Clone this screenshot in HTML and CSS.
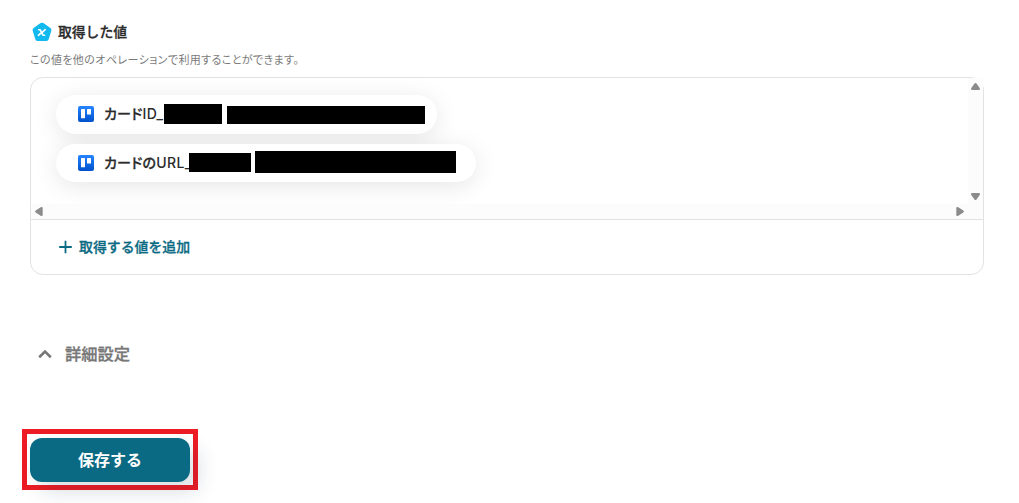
FILE: index.html
```html
<!DOCTYPE html>
<html lang="ja">
<head>
  <meta charset="UTF-8">
  <meta name="viewport" content="width=device-width, initial-scale=1.0">
  <title>取得した値</title>
  <link rel="stylesheet" href="styles.css">
</head>
<body>

<main class="content">
  <div class="heading">
    <svg class="heading-icon" width="20" height="20" viewBox="0 0 20 20">
      <path d="M8.6 1.1Q10 .2 11.4 1.1L18.4 6Q19.8 7.1 19.3 8.7L16.8 17Q16.3 19 14.4 19H5.6Q3.7 19 3.2 17L.7 8.7Q.2 7.1 1.6 6Z" fill="#12b9ee"/>
      <path d="M6.7 7.8H8.2L11 13.2H12.6M13.1 7.6L10.3 10.3M9.1 10.8L6.4 13.3" fill="none" stroke="#fff" stroke-width="1.6" stroke-linecap="round" stroke-linejoin="round"/>
    </svg>
    <h2 class="heading-text">取得した値</h2>
  </div>
  <p class="description">この値を他のオペレーションで利用することができます。</p>

  <section class="panel">
    <div class="values">
      <div class="values-list">
        <div class="value value-id">
          <svg class="trello" width="16" height="16" viewBox="0 0 16 16">
            <defs>
              <linearGradient id="blue" x1="0" y1="0" x2="0" y2="1">
                <stop offset="0" stop-color="#2684ff"/>
                <stop offset="1" stop-color="#0052cc"/>
              </linearGradient>
            </defs>
            <rect width="16" height="16" rx="2" fill="url(#blue)"/>
            <rect x="3" y="3" width="4" height="9.3" rx=".6" fill="#fff"/>
            <rect x="9" y="3" width="4" height="5.6" rx=".6" fill="#fff"/>
          </svg>
          <span class="value-text">カード<span class="latin">ID_</span></span>
          <span class="mask mask-id-name"></span>
          <span class="mask mask-id-value"></span>
        </div>
        <div class="value value-url">
          <svg class="trello" width="16" height="16" viewBox="0 0 16 16">
            <rect width="16" height="16" rx="2" fill="url(#blue)"/>
            <rect x="3" y="3" width="4" height="9.3" rx=".6" fill="#fff"/>
            <rect x="9" y="3" width="4" height="5.6" rx=".6" fill="#fff"/>
          </svg>
          <span class="value-text">カードの<span class="latin">URL_</span></span>
          <span class="mask mask-url-name"></span>
          <span class="mask mask-url-value"></span>
        </div>
      </div>
      <div class="bar bar-vertical">
        <svg width="9" height="7" viewBox="0 0 9 7"><path d="M3.5.6Q4.5-.4 5.5.6L8.7 5Q9.4 7 8 7H1Q-.4 7 .3 5Z"/></svg>
        <svg width="9" height="7" viewBox="0 0 9 7"><path d="M3.5 6.4Q4.5 7.4 5.5 6.4L8.7 2Q9.4 0 8 0H1Q-.4 0 .3 2Z"/></svg>
      </div>
      <div class="bar bar-horizontal">
        <svg width="8" height="9" viewBox="0 0 8 9"><path d="M.7 3.5Q-.4 4.5.7 5.5L5.7 8.7Q7.7 9.4 7.7 8V1Q7.7-.4 5.7.3Z"/></svg>
        <svg width="8" height="9" viewBox="0 0 8 9"><path d="M7.3 3.5Q8.4 4.5 7.3 5.5L2.3 8.7Q.3 9.4.3 8V1Q.3-.4 2.3.3Z"/></svg>
      </div>
    </div>
    <div class="add">
      <svg width="14" height="14" viewBox="0 0 14 14"><path d="M7.5 .8V13.2M1.2 7H13.8" stroke="#0b6a83" stroke-width="1.8"/></svg>
      <span>取得する値を追加</span>
    </div>
  </section>

  <div class="details">
    <svg width="14" height="10" viewBox="0 0 14 10"><path d="M1.2 8.2L7 2.6L12.8 8.2" fill="none" stroke="#777" stroke-width="2.6"/></svg>
    <span>詳細設定</span>
  </div>

  <div class="save-frame">
    <button class="save" type="button">保存する</button>
  </div>
</main>

</body>
</html>
```
FILE: styles.css
```css
*, *:before, *:after {
  box-sizing: border-box;
}

body {
  margin: 0;
  font-family: "Noto Sans CJK JP", sans-serif;
  color: #2b2b2b;
  background: #fff;
  overflow: hidden;
}

svg {
  display: block;
  flex: none;
}

.content {
  height: 503px;
  padding: 22px 35px 0 30px;
}

.heading {
  display: flex;
  align-items: center;
  gap: 6px;
  height: 20px;
  padding-left: 2px;
}

.heading-text {
  margin: 0;
  padding-bottom: 2px;
  font-size: 13.8px;
  font-weight: 500;
  line-height: 20px;
  -webkit-text-stroke: 0.3px;
}

.description {
  margin: 9px 0 10px;
  font-size: 11px;
  line-height: 16px;
  color: #7b7b7b;
  font-feature-settings: "palt";
  letter-spacing: 0.4px;
}

.panel {
  height: 198px;
  border: 1px solid #e2e2e2;
  border-radius: 13px;
}

.values {
  display: grid;
  grid-template-columns: 1fr 15px;
  grid-template-rows: 126px 15px;
  border-bottom: 1px solid #e2e2e2;
}

.values-list {
  display: flex;
  flex-direction: column;
  align-items: flex-start;
  gap: 10px;
  padding: 17px 25px 0;
  overflow: hidden;
  border-top-left-radius: 12px;
}

.value {
  position: relative;
  display: flex;
  align-items: center;
  gap: 10px;
  padding-left: 22px;
  border-radius: 20px;
  background: #fff;
  box-shadow: 0 4px 24px rgba(0, 0, 0, 0.1);
}

.value-id {
  width: 381px;
  height: 39px;
}

.value-id .trello {
  margin-bottom: 1px;
}

.value-url {
  width: 420px;
  height: 38px;
}

.value-text {
  padding-bottom: 2px;
  font-size: 14px;
  font-weight: 500;
  line-height: 20px;
  white-space: nowrap;
  font-feature-settings: "palt";
  letter-spacing: 0.2px;
  -webkit-text-stroke: 0.3px;
}

.latin {
  font-family: Inter, sans-serif;
  letter-spacing: 0.4px;
  -webkit-text-stroke: 0;
}

/* redaction blocks over the values */
.mask {
  position: absolute;
  background: #000;
}

.mask-id-name {
  left: 108px;
  top: 9px;
  width: 58px;
  height: 20px;
}

.mask-id-value {
  left: 171px;
  top: 11px;
  width: 198px;
  height: 18px;
}

.mask-url-name {
  left: 133px;
  top: 9px;
  width: 62px;
  height: 19px;
}

.mask-url-value {
  left: 199px;
  top: 7px;
  width: 201px;
  height: 22px;
}

.bar {
  display: flex;
  justify-content: space-between;
  align-items: center;
  background: #fcfcfc;
  fill: #8b8b8b;
}

.bar-vertical {
  flex-direction: column;
  padding: 5px 0 4px;
}

.bar-horizontal {
  grid-column: 1 / 3;
  padding: 0 19px 0 4px;
}

.add {
  display: flex;
  align-items: center;
  gap: 7px;
  height: 54px;
  padding-left: 27px;
  font-size: 13.9px;
  font-weight: 500;
  color: #0b6a83;
  -webkit-text-stroke: 0.3px;
}

.add span {
  padding-bottom: 2px;
}

.details {
  display: flex;
  align-items: center;
  gap: 13px;
  height: 24px;
  margin-top: 67px;
  padding-left: 8px;
  font-size: 16.3px;
  font-weight: 500;
  color: #777;
  -webkit-text-stroke: 0.3px;
}

.details span {
  padding-bottom: 2px;
}

.save-frame {
  width: 176px;
  height: 61px;
  margin: 63px 0 0 -8px;
  padding: 4px 3px;
  border: 5px solid #ed1c24;
}

.save {
  display: block;
  width: 160px;
  height: 44px;
  padding: 0 0 2px;
  border: 0;
  border-radius: 12px;
  background: #0b6a83;
  box-shadow: 9px 10px 20px rgba(11, 50, 75, 0.15);
  font-family: inherit;
  font-size: 16px;
  font-weight: 700;
  color: #fff;
}
```
